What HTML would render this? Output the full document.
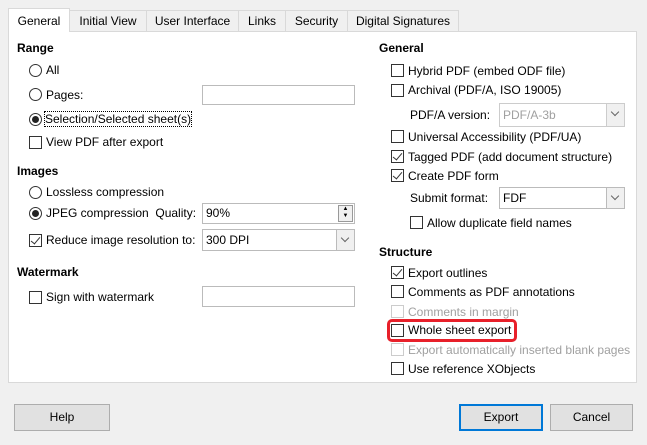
<!DOCTYPE html><html><head><style>
*{margin:0;padding:0;box-sizing:border-box}
body{width:647px;height:445px;background:#f0f0f0;font-family:"Liberation Sans",sans-serif;font-size:12px;color:#000;position:relative;overflow:hidden}
.a{position:absolute;white-space:nowrap;line-height:14px}
.panel{position:absolute;left:8px;top:31px;width:629px;height:352px;background:#fff;border:1px solid #d9d9d9}
.tab{position:absolute;top:10px;height:21px;border:1px solid #d9d9d9;border-bottom:none;background:#f0f0f0;text-align:center;line-height:20px}
.cb{position:absolute;width:13px;height:13px;border:1px solid #333;background:#fff}
.cb.d{border-color:#ccc}
.rb{position:absolute;width:13px;height:13px;border:1px solid #333;border-radius:50%;background:#fff}
.rb.on::after{content:"";position:absolute;left:2px;top:2px;width:7px;height:7px;border-radius:50%;background:#222}
.cb.on::after{content:"";position:absolute;left:3px;top:0px;width:4px;height:8px;border:solid #333;border-width:0 1px 1px 0;transform:rotate(40deg)}
.h{font-weight:bold}
.inp{position:absolute;border:1px solid #bbb;background:#fff;padding-left:3px;line-height:18px}
.dd{position:absolute;right:0;top:0;bottom:0;width:18px;border-left:1px solid #bbb;background:#f0f0f0}
.dd::after{content:"";position:absolute;left:5px;top:5px;width:5px;height:5px;border:solid #666;border-width:0 1px 1px 0;transform:rotate(45deg)}
.btn{position:absolute;top:404px;height:27px;border:1px solid #adadad;background:#e1e1e1;text-align:center;line-height:25px}
.g{color:#a0a0a0}
</style></head><body>
<div class="panel"></div>
<div class="tab" style="left:69px;width:78px">Initial View</div>
<div class="tab" style="left:146px;width:93px">User Interface</div>
<div class="tab" style="left:238px;width:48px">Links</div>
<div class="tab" style="left:285px;width:63px">Security</div>
<div class="tab" style="left:347px;width:112px">Digital Signatures</div>
<div class="tab" style="left:8px;top:8px;width:62px;height:24px;background:#fff;line-height:24px">General</div>

<div class="a h" style="left:17px;top:41px">Range</div>
<div class="rb" style="left:29px;top:64px"></div><div class="a" style="left:46px;top:63px">All</div>
<div class="rb" style="left:29px;top:88px"></div><div class="a" style="left:46px;top:88px">Pages:</div>
<div class="inp" style="left:202px;top:85px;width:153px;height:20px"></div>
<div class="rb on" style="left:29px;top:113px"></div><div class="a" style="left:45px;top:112px;outline:1px dotted #000">Selection/Selected sheet(s)</div>
<div class="cb" style="left:29px;top:136px"></div><div class="a" style="left:46px;top:135px">View PDF after export</div>

<div class="a h" style="left:17px;top:164px">Images</div>
<div class="rb" style="left:29px;top:186px"></div><div class="a" style="left:46px;top:185px">Lossless compression</div>
<div class="rb on" style="left:29px;top:207px"></div><div class="a" style="left:46px;top:206px">JPEG compression&nbsp; Quality:</div>
<div class="inp" style="left:202px;top:203px;width:153px;height:21px">90%<div style="position:absolute;right:1px;top:1px;width:15px;height:17px;border:1px solid #999;background:#f0f0f0;font-size:6px;line-height:7px;text-align:center">▲<br>▼</div></div>
<div class="cb on" style="left:29px;top:234px"></div><div class="a" style="left:46px;top:233px">Reduce image resolution to:</div>
<div class="inp" style="left:202px;top:229px;width:153px;height:22px;line-height:20px">300 DPI<div class="dd"></div></div>

<div class="a h" style="left:17px;top:265px">Watermark</div>
<div class="cb" style="left:29px;top:291px"></div><div class="a" style="left:46px;top:290px">Sign with watermark</div>
<div class="inp" style="left:202px;top:286px;width:153px;height:21px"></div>

<div class="a h" style="left:379px;top:41px">General</div>
<div class="cb" style="left:391px;top:64px"></div><div class="a" style="left:408px;top:64px">Hybrid PDF (embed ODF file)</div>
<div class="cb" style="left:391px;top:84px"></div><div class="a" style="left:408px;top:83px">Archival (PDF/A, ISO 19005)</div>
<div class="a" style="left:410px;top:108px">PDF/A version:</div>
<div class="inp g" style="left:499px;top:103px;width:126px;height:24px;line-height:22px;border-color:#ccc">PDF/A-3b<div class="dd" style="border-color:#ccc"></div></div>
<div class="cb" style="left:391px;top:130px"></div><div class="a" style="left:408px;top:130px">Universal Accessibility (PDF/UA)</div>
<div class="cb on" style="left:391px;top:150px"></div><div class="a" style="left:408px;top:150px">Tagged PDF (add document structure)</div>
<div class="cb on" style="left:391px;top:169px"></div><div class="a" style="left:408px;top:169px">Create PDF form</div>
<div class="a" style="left:410px;top:191px">Submit format:</div>
<div class="inp" style="left:499px;top:187px;width:126px;height:22px;line-height:20px">FDF<div class="dd"></div></div>
<div class="cb" style="left:410px;top:216px"></div><div class="a" style="left:427px;top:216px">Allow duplicate field names</div>

<div class="a h" style="left:379px;top:245px">Structure</div>
<div class="cb on" style="left:391px;top:266px"></div><div class="a" style="left:408px;top:266px">Export outlines</div>
<div class="cb" style="left:391px;top:285px"></div><div class="a" style="left:408px;top:285px">Comments as PDF annotations</div>
<div class="cb d" style="left:391px;top:305px"></div><div class="a g" style="left:408px;top:305px">Comments in margin</div>
<div class="cb" style="left:391px;top:324px"></div><div class="a" style="left:408px;top:323px">Whole sheet export</div>
<div style="position:absolute;left:387px;top:319px;width:130px;height:23px;border:3px solid #e8202a;border-radius:5px"></div>
<div class="cb d" style="left:391px;top:343px"></div><div class="a g" style="left:408px;top:343px">Export automatically inserted blank pages</div>
<div class="cb" style="left:391px;top:362px"></div><div class="a" style="left:408px;top:362px">Use reference XObjects</div>

<div class="btn" style="left:14px;width:96px">Help</div>
<div class="btn" style="left:459px;width:84px;border:2px solid #0078d7;line-height:23px">Export</div>
<div class="btn" style="left:550px;width:83px">Cancel</div>
</body></html>
